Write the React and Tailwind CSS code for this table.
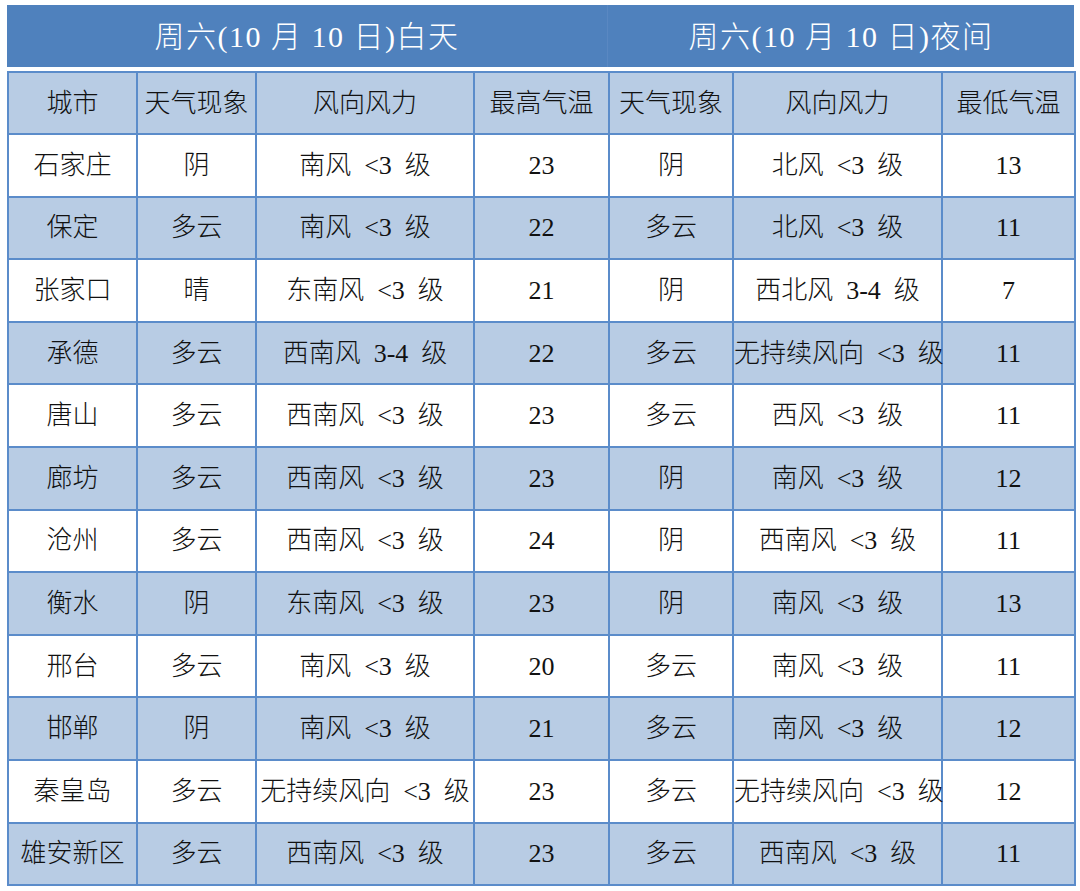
import React from "react";

const S = "\u2002";

const rows = [
  ["石家庄", "阴", "南风 <3 级", "23", "阴", "北风 <3 级", "13"],
  ["保定", "多云", "南风 <3 级", "22", "多云", "北风 <3 级", "11"],
  ["张家口", "晴", "东南风 <3 级", "21", "阴", "西北风 3-4 级", "7"],
  ["承德", "多云", "西南风 3-4 级", "22", "多云", "无持续风向 <3 级", "11"],
  ["唐山", "多云", "西南风 <3 级", "23", "多云", "西风 <3 级", "11"],
  ["廊坊", "多云", "西南风 <3 级", "23", "阴", "南风 <3 级", "12"],
  ["沧州", "多云", "西南风 <3 级", "24", "阴", "西南风 <3 级", "11"],
  ["衡水", "阴", "东南风 <3 级", "23", "阴", "南风 <3 级", "13"],
  ["邢台", "多云", "南风 <3 级", "20", "多云", "南风 <3 级", "11"],
  ["邯郸", "阴", "南风 <3 级", "21", "多云", "南风 <3 级", "12"],
  ["秦皇岛", "多云", "无持续风向 <3 级", "23", "多云", "无持续风向 <3 级", "12"],
  ["雄安新区", "多云", "西南风 <3 级", "23", "多云", "西南风 <3 级", "11"],
];

const head = ["城市", "天气现象", "风向风力", "最高气温", "天气现象", "风向风力", "最低气温"];
const widths = ["w-[129px]", "w-[119px]", "w-[218px]", "w-[135px]", "w-[124px]", "w-[209px]", "w-[133px]"];

const font = { fontFamily: '"Liberation Serif", "Noto Sans CJK SC", serif' };

// wider gaps like the original's half-width CJK spaces
const sp = (t) => t.split(" ").join(S);

export default function App() {
  return (
    <div className="w-[1080px] h-[891px] bg-white pt-[5px] pl-[7px]" style={font}>
      {/* TITLE BAR */}
      <div className="flex w-[1067px] h-[62px] bg-[#4f81bd] text-white text-[30px] font-light">
        <div className="w-[601px] flex items-center justify-center border-r border-[#5a88c2] tracking-[1.5px]">
          周六(10 月 10 日)白天
        </div>
        <div className="flex-1 flex items-center justify-center tracking-[1.5px]">
          周六(10 月 10 日)夜间
        </div>
      </div>

      {/* TABLE */}
      <table className="mt-[4px] w-[1067px] table-fixed border-collapse text-[#111] text-[26px] font-light">
        <colgroup>
          {widths.map((w, i) => (
            <col key={i} className={w} />
          ))}
        </colgroup>
        <thead>
          <tr className="h-[62px] bg-[#b8cce4]">
            {head.map((h, i) => (
              <th key={i} className="border-2 border-[#5b8cca] font-light text-center whitespace-nowrap p-0">
                {h}
              </th>
            ))}
          </tr>
        </thead>
        <tbody>
          {rows.map((r, ri) => (
            <tr key={ri} className={ri % 2 ? "h-[62.6px] bg-[#b8cce4]" : "h-[62.6px] bg-white"}>
              {r.map((c, ci) => (
                <td key={ci} className="border-2 border-[#5b8cca] text-center whitespace-nowrap p-0">
                  {sp(c)}
                </td>
              ))}
            </tr>
          ))}
        </tbody>
      </table>
    </div>
  );
}
